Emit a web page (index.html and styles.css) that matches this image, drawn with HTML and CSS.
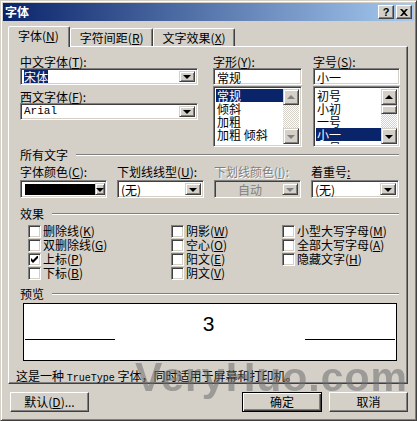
FILE: index.html
```html
<!DOCTYPE html>
<html lang="zh-CN">
<head>
    <meta charset="UTF-8">
    <title>字体</title>
    <link rel="stylesheet" href="styles.css">
</head>
<body>
<div class="window">
    <div class="titlebar">
        <span class="title">字体</span>
        <div class="caption-buttons">
            <div class="cap-btn">?</div>
            <div class="cap-btn close">
                <svg width="8" height="7" viewBox="0 0 8 7"><path d="M0 0h2l2 2 2-2h2L5 3.5 8 7H6L4 5 2 7H0l3-3.5z" fill="#000"/></svg>
            </div>
        </div>
    </div>

    <div class="tabs">
        <div class="tab active">字体(<u>N</u>)</div>
        <div class="tab">字符间距(<u>R</u>)</div>
        <div class="tab">文字效果(<u>X</u>)</div>
    </div>

    <div class="panel">
        <div class="font-row">
            <div class="col col-face">
                <div class="label">中文字体(<u>T</u>):</div>
                <div class="combo">
                    <div class="combo-text"><span class="sel">宋体</span></div>
                    <div class="drop-btn"><i class="arrow"></i></div>
                </div>
                <div class="label gap">西文字体(<u>F</u>):</div>
                <div class="combo">
                    <div class="combo-text mono">Arial</div>
                    <div class="drop-btn"><i class="arrow"></i></div>
                </div>
            </div>
            <div class="col col-style">
                <div class="label">字形(<u>Y</u>):</div>
                <div class="textbox">常规</div>
                <div class="listbox">
                    <div class="items">
                        <div class="item selected">常规</div>
                        <div class="item">倾斜</div>
                        <div class="item">加粗</div>
                        <div class="item">加粗 倾斜</div>
                    </div>
                    <div class="scrollbar">
                        <div class="sb-btn"><i class="up disabled"></i></div>
                        <div class="sb-track"></div>
                        <div class="sb-btn"><i class="down disabled"></i></div>
                    </div>
                </div>
            </div>
            <div class="col col-size">
                <div class="label">字号(<u>S</u>):</div>
                <div class="textbox">小一</div>
                <div class="listbox">
                    <div class="items">
                        <div class="item">初号</div>
                        <div class="item">小初</div>
                        <div class="item">一号</div>
                        <div class="item selected">小一</div>
                        <div class="item">二号</div>
                    </div>
                    <div class="scrollbar">
                        <div class="sb-btn"><i class="up"></i></div>
                        <div class="sb-thumb"></div>
                        <div class="sb-track"></div>
                        <div class="sb-btn"><i class="down"></i></div>
                    </div>
                </div>
            </div>
        </div>

        <div class="group-head"><span>所有文字</span><div class="rule"></div></div>
        <div class="attr-row">
            <div class="attr">
                <div class="label">字体颜色(<u>C</u>):</div>
                <div class="combo tall">
                    <div class="combo-text"><div class="swatch"></div></div>
                    <div class="drop-btn"><i class="arrow"></i></div>
                </div>
            </div>
            <div class="attr">
                <div class="label">下划线线型(<u>U</u>):</div>
                <div class="combo tall">
                    <div class="combo-text">(无)</div>
                    <div class="drop-btn"><i class="arrow"></i></div>
                </div>
            </div>
            <div class="attr disabled">
                <div class="label">下划线颜色(<u>I</u>):</div>
                <div class="combo tall off">
                    <div class="combo-text center">自动</div>
                    <div class="drop-btn"><i class="arrow"></i></div>
                </div>
            </div>
            <div class="attr">
                <div class="label">着重号<u>:</u></div>
                <div class="combo tall">
                    <div class="combo-text">(无)</div>
                    <div class="drop-btn"><i class="arrow"></i></div>
                </div>
            </div>
        </div>

        <div class="group-head effects-head"><span>效果</span><div class="rule"></div></div>
        <div class="effects">
            <label class="check"><span class="box"></span>删除线(<u>K</u>)</label>
            <label class="check"><span class="box"></span>阴影(<u>W</u>)</label>
            <label class="check"><span class="box"></span>小型大写字母(<u>M</u>)</label>
            <label class="check"><span class="box"></span>双删除线(<u>G</u>)</label>
            <label class="check"><span class="box"></span>空心(<u>O</u>)</label>
            <label class="check"><span class="box"></span>全部大写字母(<u>A</u>)</label>
            <label class="check"><span class="box"><svg width="7" height="7" viewBox="0 0 7 7"><path d="M0 2v3l2 2 5-5V-1L2 4z" fill="#000"/></svg></span>上标(<u>P</u>)</label>
            <label class="check"><span class="box"></span>阳文(<u>E</u>)</label>
            <label class="check"><span class="box"></span>隐藏文字(<u>H</u>)</label>
            <label class="check"><span class="box"></span>下标(<u>B</u>)</label>
            <label class="check"><span class="box"></span>阴文(<u>V</u>)</label>
        </div>

        <div class="group-head preview-head"><span>预览</span><div class="rule"></div></div>
        <div class="preview">
            <div class="sample">3</div>
            <div class="baseline">
                <div class="bl"></div>
                <div class="bl"></div>
            </div>
        </div>
        <div class="note">这是一种 <span class="mono">TrueType</span> 字体，同时适用于屏幕和打印机。</div>
    </div>

    <div class="buttons">
        <div class="btn">默认(<u>D</u>)...</div>
        <div class="spacer"></div>
        <div class="btn default">确定</div>
        <div class="btn">取消</div>
    </div>

    <div class="watermark">VeryHuo.com</div>
</div>
</body>
</html>
```

FILE: styles.css
```css
body {
    margin: 0;
    font-family: "Noto Sans CJK SC", "Liberation Sans", sans-serif;
    font-size: 12px;
    color: #000;
    background: #d4d0c8;
}
u {
    text-decoration: underline;
    text-underline-offset: 1px;
}
.mono {
    font-family: "Liberation Mono", "Noto Sans CJK SC", monospace;
    font-size: 10px;
}
.window {
    position: relative;
    width: 417px;
    height: 421px;
    box-sizing: border-box;
    padding: 2px;
    background: #d4d0c8;
    border: 1px solid;
    border-color: #d4d0c8 #404040 #404040 #d4d0c8;
    box-shadow: inset 1px 1px #fff, inset -1px -1px #808080;
    overflow: hidden;
}
.titlebar {
    height: 18px;
    display: flex;
    align-items: center;
    justify-content: space-between;
    padding: 0 2px;
    background: linear-gradient(90deg, #0a246a, #a6caf0);
}
.title {
    color: #fff;
    font-weight: bold;
    line-height: 18px;
}
.caption-buttons {
    display: flex;
    gap: 2px;
}
.cap-btn {
    width: 16px;
    height: 14px;
    box-sizing: border-box;
    background: #d4d0c8;
    border: 1px solid;
    border-color: #fff #404040 #404040 #fff;
    box-shadow: inset -1px -1px #808080;
    font-family: "Liberation Sans", sans-serif;
    font-weight: bold;
    font-size: 11px;
    line-height: 12px;
    text-align: center;
    display: flex;
    align-items: center;
    justify-content: center;
}
.tabs {
    display: flex;
    align-items: flex-end;
    height: 20px;
    margin-top: 5px;
    padding-left: 5px;
    position: relative;
    z-index: 1;
}
.tab {
    height: 17px;
    line-height: 17px;
    padding: 0 8px 0 9px;
    border: 1px solid;
    border-bottom: none;
    border-color: #fff #404040 transparent #fff;
    box-shadow: inset -1px 0 #808080;
    border-radius: 2px 2px 0 0;
    background: #d4d0c8;
}
.tab.active {
    height: 20px;
    line-height: 18px;
    margin-bottom: -1px;
    padding: 0 10px 0 9px;
}
.panel {
    height: 338px;
    box-sizing: border-box;
    margin: 0 6px 0 5px;
    padding: 8px 0 0 11px;
    border: 1px solid;
    border-color: #fff #404040 #404040 #fff;
    box-shadow: inset -1px -1px #808080;
}
.label {
    line-height: 13px;
    height: 13px;
    white-space: nowrap;
}
.label.gap {
    margin-top: 5px;
}
.font-row {
    display: flex;
}
.col-face {
    width: 178px;
}
.col-style {
    width: 89px;
    margin-left: 15px;
}
.col-size {
    width: 87px;
    margin-left: 11px;
}
.combo, .textbox, .listbox {
    box-sizing: border-box;
    background: #fff;
    border: 1px solid;
    border-color: #808080 #fff #fff #808080;
    box-shadow: inset 1px 1px #404040, inset -1px -1px #d4d0c8;
}
.combo {
    height: 17px;
    display: flex;
    padding: 2px;
}
.combo.tall {
    height: 18px;
}
.combo.off {
    background: #d4d0c8;
    color: #808080;
}
.combo-text {
    flex: 1;
    line-height: 13px;
    padding-left: 1px;
    white-space: nowrap;
    display: flex;
    align-items: center;
}
.combo-text.center {
    justify-content: center;
}
.combo-text.mono {
    font-size: 11px;
}
.sel {
    background: #0a246a;
    color: #fff;
    line-height: 13px;
}
.swatch {
    width: 70px;
    height: 11px;
    background: #000;
    margin-left: 1px;
}
.drop-btn {
    width: 16px;
    box-sizing: border-box;
    background: #d4d0c8;
    border: 1px solid;
    border-color: #d4d0c8 #404040 #404040 #d4d0c8;
    box-shadow: inset 1px 1px #fff, inset -1px -1px #808080;
    display: flex;
    align-items: center;
    justify-content: center;
}
.arrow, .down {
    width: 0;
    height: 0;
    border-left: 4px solid transparent;
    border-right: 4px solid transparent;
    border-top: 4px solid #000;
    margin-top: 1px;
}
.combo.off .arrow {
    border-top-color: #808080;
}
.up {
    width: 0;
    height: 0;
    border-left: 4px solid transparent;
    border-right: 4px solid transparent;
    border-bottom: 4px solid #000;
    margin-bottom: 1px;
}
.up.disabled {
    border-bottom-color: #808080;
}
.down.disabled {
    border-top-color: #808080;
}
.textbox {
    height: 17px;
    padding: 2px 3px;
    line-height: 13px;
}
.listbox {
    height: 61px;
    margin-top: 1px;
    padding: 2px;
    display: flex;
    overflow: hidden;
}
.items {
    flex: 1;
    overflow: hidden;
}
.item {
    height: 13px;
    line-height: 13px;
    padding-left: 1px;
    white-space: pre;
}
.item.selected {
    background: #0a246a;
    color: #fff;
}
.scrollbar {
    width: 16px;
    display: flex;
    flex-direction: column;
}
.sb-btn, .sb-thumb {
    height: 16px;
    box-sizing: border-box;
    background: #d4d0c8;
    border: 1px solid;
    border-color: #d4d0c8 #404040 #404040 #d4d0c8;
    box-shadow: inset 1px 1px #fff, inset -1px -1px #808080;
    display: flex;
    align-items: center;
    justify-content: center;
}
.sb-thumb {
    height: 9px;
}
.sb-track {
    flex: 1;
    background: repeating-conic-gradient(#fff 0 25%, #d4d0c8 0 50%) 0 0 / 2px 2px;
}
.group-head {
    display: flex;
    align-items: center;
    height: 13px;
    line-height: 13px;
    margin-top: 1px;
    margin-right: 8px;
}
.group-head span {
    white-space: nowrap;
    margin-right: 8px;
}
.rule {
    flex: 1;
    height: 0;
    border-top: 1px solid #808080;
    border-bottom: 1px solid #fff;
    margin-top: 1px;
}
.attr-row {
    display: grid;
    grid-template-columns: 87px 87px 87px 88px;
    column-gap: 10px;
    margin-top: 4px;
}
.attr .combo {
    margin-top: 2px;
}
.attr.disabled .label {
    color: #808080;
    text-shadow: 1px 1px #fff;
}
.effects-head {
    margin-top: 9px;
}
.effects {
    display: grid;
    grid-template-columns: 143px 111px 1fr;
    grid-auto-rows: 14px;
    margin: 4px 0 0 8px;
}
.check {
    display: flex;
    align-items: center;
    white-space: nowrap;
    line-height: 14px;
}
.box {
    width: 13px;
    height: 13px;
    box-sizing: border-box;
    margin-right: 2px;
    background: #fff;
    border: 1px solid;
    border-color: #808080 #fff #fff #808080;
    box-shadow: inset 1px 1px #404040, inset -1px -1px #d4d0c8;
    display: flex;
    align-items: center;
    justify-content: center;
}
.preview-head {
    margin-top: 7px;
}
.preview {
    width: 374px;
    height: 58px;
    box-sizing: border-box;
    margin: 3px 0 0 3px;
    background: #fff;
    border: 1px solid #000;
    display: flex;
    flex-direction: column;
}
.sample {
    font-family: "Liberation Sans", sans-serif;
    font-size: 21px;
    line-height: 21px;
    text-align: center;
    margin: 9px 0 0 -3px;
}
.baseline {
    display: flex;
    justify-content: space-between;
    margin-top: 5px;
    padding: 0 1px;
}
.bl {
    width: 90px;
    height: 1px;
    background: #000;
}
.note {
    margin: 8px 0 0 -4px;
    line-height: 13px;
    white-space: nowrap;
}
.note .mono {
    font-size: 10px;
}
.buttons {
    display: flex;
    margin: 8px 6px 0 7px;
    gap: 7px;
}
.spacer {
    flex: 1;
}
.btn {
    width: 79px;
    height: 20px;
    box-sizing: border-box;
    line-height: 18px;
    text-align: center;
    border: 1px solid;
    border-color: #fff #404040 #404040 #fff;
    box-shadow: inset -1px -1px #808080;
}
.btn.default {
    width: 80px;
    border: 1px solid #000;
    box-shadow: inset 1px 1px #fff, inset -1px -1px #404040, inset -2px -2px #808080;
}
.watermark {
    position: absolute;
    left: 134px;
    top: 352px;
    font-family: "Liberation Sans", sans-serif;
    font-weight: bold;
    font-size: 41px;
    letter-spacing: 1px;
    line-height: 48px;
    color: #6e6e6e;
    opacity: 0.55;
    pointer-events: none;
}
```
